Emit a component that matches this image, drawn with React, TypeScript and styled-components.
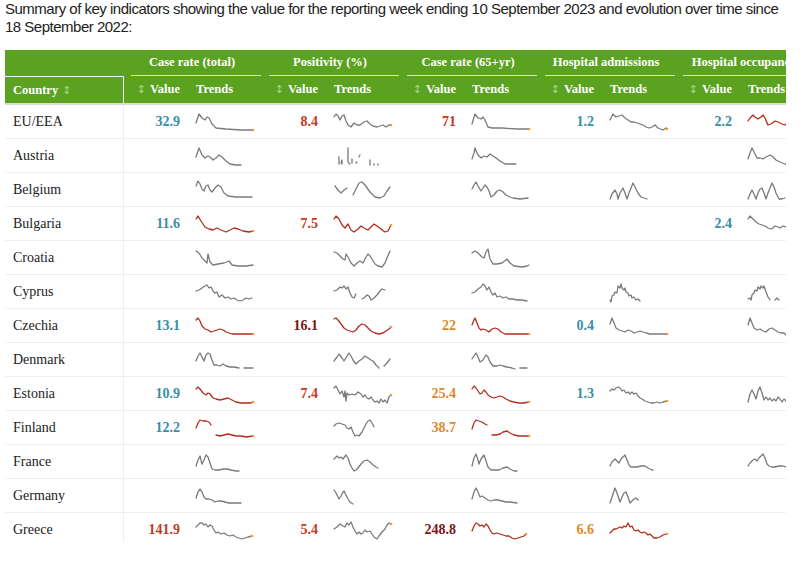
import React from 'react';
import styled, { createGlobalStyle } from 'styled-components';

const GlobalStyle = createGlobalStyle`
  html, body {
    margin: 0;
    padding: 0;
    background: #ffffff;
  }
`;

type Tone = 'teal' | 'red' | 'dark' | 'orange';

interface Cell {
  v?: string;
  tone?: Tone;
  d?: string;
  hot?: boolean;
  dot?: boolean;
}

interface Row {
  name: string;
  cells: Cell[];
}

const toneColor: Record<Tone, string> = {
  teal: '#3a8ea6',
  red: '#c33a1c',
  dark: '#7c1518',
  orange: '#e0892c',
};

const groups = ['Case rate (total)', 'Positivity (%)', 'Case rate (65+yr)', 'Hospital admissions', 'Hospital occupancy'];

const rows: Row[] = [
  { name: 'EU/EEA', cells: [
    { v: '32.9', tone: 'teal', dot: true, d: '0,10 3,1 6,5 9,7 11,4 13,5 16,11 20,15 30,16 45,17 57,17' },
    { v: '8.4', tone: 'red', dot: true, d: '0,4 2,1 4,3 6,7 8,3 10,2 12,8 14,12 17,14 20,10 23,12 26,12 30,9 33,8 36,11 39,13 43,14 46,13 49,12 52,14 55,12 57,12' },
    { v: '71', tone: 'red', dot: true, d: '0,11 3,1 6,5 9,6 11,4 13,7 16,14 20,15 30,15 45,16 57,16' },
    { v: '1.2', tone: 'teal', dot: true, d: '0,7 3,1 6,4 9,3 12,2 15,5 18,7 21,9 24,9 27,10 30,11 33,12 36,14 39,15 42,14 45,12 48,15 53,17 56,15 57,16' },
    { v: '2.2', tone: 'teal', hot: true, d: '0,8 2,5 5,2 7,4 10,6 13,4 15,2 17,5 20,12 23,11 27,8 30,9 34,11 37,12 40,10 44,12 48,14 52,13 57,14' },
  ] },
  { name: 'Austria', cells: [
    { d: '0,10 3,1 6,8 9,11 12,9 14,10 17,13 20,11 23,8 26,10 30,14 34,17 40,18 45,18' },
    { d: '5,10 5,17|7,16 8,13 8,17|14,1 14,15 16,17|18,12 18,16|22,16 23,15|25,10 26,8|36,13 36,18|40,17 40,18|44,17 44,18' },
    { d: '0,12 2,6 3,1 6,8 9,11 12,9 15,10 18,7 21,9 24,11 28,14 33,17 44,17' },
    {},
    { d: '0,12 2,6 4,1 6,5 9,11 12,11 15,12 18,10 22,8 25,10 28,13 32,15 37,17 42,17' },
  ] },
  { name: 'Belgium', cells: [
    { d: '0,5 2,0 4,3 6,8 8,10 10,5 12,4 14,9 16,11 19,7 22,4 25,6 28,12 32,15 40,16 56,16' },
    { d: '1,5 4,9 7,12 10,9 13,7|19,14 22,8 25,2 28,1 31,4 36,11 41,16 46,17 50,15 53,10 56,6' },
    { d: '0,8 2,4 4,1 6,5 9,10 11,7 13,4 15,6 17,10 19,16 22,14 25,10 28,9 31,11 34,14 38,16 41,17 48,18 56,17' },
    { d: '0,18 2,13 5,9 7,13 8,18 10,12 13,7 15,12 17,18 19,12 21,7 23,2 25,6 28,12 31,16 37,18' },
    { d: '0,18 2,13 4,9 6,13 8,18 10,12 12,8 14,7 16,12 18,18 20,12 22,7 24,2 26,6 28,12 31,18 34,18 37,17' },
  ] },
  { name: 'Bulgaria', cells: [
    { v: '11.6', tone: 'teal', hot: true, dot: true, d: '0,4 2,1 5,6 9,12 13,14 17,15 21,13 25,15 30,17 34,15 38,13 42,14 47,16 53,17 57,16' },
    { v: '7.5', tone: 'red', hot: true, dot: true, d: '0,4 2,1 5,4 8,10 11,13 14,9 17,15 20,17 24,14 27,11 30,13 34,15 37,12 40,9 43,11 47,14 51,17 54,16 57,10' },
    {},
    {},
    { v: '2.4', tone: 'teal', d: '0,4 2,1 5,4 8,7 11,9 14,10 17,11 20,13 23,14 25,13 27,11 30,12 32,13 35,11 38,12' },
  ] },
  { name: 'Croatia', cells: [
    { d: '0,2 3,4 6,9 9,12 11,14 12,5 14,13 17,16 22,15 28,14 33,12 36,16 42,17 50,17 57,16' },
    { d: '0,3 3,4 6,7 9,10 11,11 12,5 14,8 17,14 20,17 23,14 26,12 29,14 32,8 34,5 36,7 38,10 41,15 44,17 48,18 51,14 53,9 56,2' },
    { d: '0,4 3,2 6,4 10,8 12,9 14,3 16,0 18,10 21,15 25,15 30,14 34,11 35,10 38,14 42,17 50,18 55,17 57,16' },
    {},
    {},
  ] },
  { name: 'Cyprus', cells: [
    { d: '0,8 3,7 6,5 9,3 11,2 13,5 15,4 17,8 19,10 21,9 23,14 26,12 29,15 32,14 35,16 38,15 41,17 44,18 47,17 50,15 53,16 56,15' },
    { d: '0,8 3,7 6,4 8,5 10,3 12,6 14,4 16,10 18,14 20,15 22,11|28,16 30,15 33,12 35,13 37,17 40,15 43,12 46,8 48,6 51,7' },
    { d: '0,10 3,9 6,6 9,4 11,1 13,3 15,7 17,4 19,9 21,12 23,10 25,14 28,13 31,15 34,14 37,16 41,16 45,17 50,17 55,18' },
    { d: '0,17 1,19 2,13 4,12 5,9 7,10 8,3 10,5 11,1 12,5 14,7 15,5 16,9 18,10 19,13 21,12 22,15 24,14 26,17 28,16 30,18' },
    { d: '0,16 2,15 3,17 4,12 6,10 7,7 9,8 10,4 12,6 13,3 15,5 16,3 18,9 20,14 22,17|27,17 29,15 31,17' },
  ] },
  { name: 'Czechia', cells: [
    { v: '13.1', tone: 'teal', hot: true, dot: true, d: '0,3 2,1 4,4 6,9 9,12 12,13 15,15 18,14 21,13 24,12 27,13 30,15 33,16 36,17 45,17 57,17' },
    { v: '16.1', tone: 'dark', hot: true, dot: true, d: '0,2 2,1 4,3 7,7 10,11 13,13 16,14 19,15 22,13 25,9 28,7 31,8 34,11 37,14 41,16 45,17 49,16 52,14 55,12 57,10' },
    { v: '22', tone: 'orange', hot: true, dot: true, d: '0,8 2,3 3,1 5,6 7,11 9,13 11,12 14,13 17,15 20,12 23,11 26,12 29,15 33,17 45,17 57,17' },
    { v: '0.4', tone: 'teal', dot: true, d: '0,7 2,1 4,6 6,11 9,13 12,14 15,15 18,13 21,14 24,16 27,15 30,14 33,15 36,16 40,17 50,17 57,17' },
    { d: '0,8 2,1 4,6 6,11 9,13 12,12 15,14 18,15 21,12 24,11 27,13 30,15 33,16 36,16 38,18' },
  ] },
  { name: 'Denmark', cells: [
    { d: '0,10 2,5 4,2 6,6 8,10 10,4 12,2 14,3 16,9 18,14 21,14 24,15 27,13 30,15 34,16 38,16 43,17|48,17 57,17' },
    { d: '0,10 3,6 5,3 8,7 10,10 13,5 15,2 17,5 19,9 22,13 25,10 28,8 31,5 34,7 37,9 39,10 42,14 45,17|50,15 53,12 56,8' },
    { d: '0,8 2,5 4,2 6,6 8,11 11,9 14,4 16,6 18,11 21,15 25,15 28,14 31,15 35,16 40,17 43,18|48,17 55,17' },
    {},
    {},
  ] },
  { name: 'Estonia', cells: [
    { v: '10.9', tone: 'teal', hot: true, dot: true, d: '0,4 2,2 4,4 7,8 10,10 12,8 14,9 17,13 20,14 24,15 28,14 32,13 36,15 40,17 45,18 50,18 55,18 57,17' },
    { v: '7.4', tone: 'red', dot: true, d: '0,3 2,1 4,5 6,9 8,6 10,12 11,6 12,16 13,8 15,10 18,9 21,10 24,7 27,9 29,12 31,10 33,13 35,14 37,12 39,15 41,17 43,16 45,18 47,14 49,17 51,15 53,18 55,12 57,10' },
    { v: '25.4', tone: 'orange', hot: true, dot: true, d: '0,4 2,1 4,3 6,6 8,9 10,8 12,5 14,7 16,10 19,12 22,13 25,12 28,11 31,12 34,14 38,16 42,17 47,18 52,18 57,17' },
    { v: '1.3', tone: 'teal', dot: true, d: '0,6 2,4 4,5 6,3 8,2 10,3 12,6 14,5 16,8 18,7 20,9 22,7 24,9 26,8 28,11 30,13 32,14 35,16 38,17 41,18 44,18 47,17 50,18 53,17 57,16' },
    { d: '0,17 2,9 4,5 6,9 8,14 10,6 12,2 14,8 16,15 18,12 20,15 22,13 24,16 26,14 28,16 30,12 32,14 34,17 36,14 38,16' },
  ] },
  { name: 'Finland', cells: [
    { v: '12.2', tone: 'teal', hot: true, dot: true, d: '0,9 2,4 4,1 7,2 10,2 13,3 15,6|20,16 24,17 28,16 32,15 36,16 40,17 45,17 50,18 57,17' },
    { d: '0,7 2,5 5,4 8,5 11,6 13,9 15,10 17,8 19,13 21,17 23,16 25,17 28,13 30,9 32,5 34,2 36,1 38,4 40,8' },
    { v: '38.7', tone: 'orange', hot: true, dot: true, d: '0,10 2,4 4,1 7,2 10,3 13,5 15,6|20,16 24,16 28,15 31,13 35,12 38,14 42,16 47,17 52,17 57,17' },
    {},
    {},
  ] },
  { name: 'France', cells: [
    { d: '0,13 2,7 4,3 6,11 8,7 10,2 12,4 14,10 16,16 19,17 23,17 27,16 31,16 35,17 40,18 43,18' },
    { d: '0,6 3,3 5,5 7,4 9,6 12,2 14,5 16,11 18,15 20,18 22,17 24,15 27,11 30,8 33,7 36,9 39,12 42,14 44,15' },
    { d: '0,13 2,5 4,1 6,7 7,11 9,6 12,2 14,8 16,14 19,17 23,17 27,17 31,15 35,14 38,16 42,18 45,18' },
    { d: '0,13 2,9 5,6 7,8 9,10 11,6 13,4 15,2 17,7 19,12 21,14 24,14 27,14 31,13 35,13 38,15 42,17 43,17' },
    { d: '0,13 2,10 5,7 7,6 9,8 11,5 13,3 15,1 17,5 19,11 21,13 24,14 27,14 31,13 35,13 38,14' },
  ] },
  { name: 'Germany', cells: [
    { d: '0,11 2,5 4,2 6,5 8,10 10,12 13,12 16,13 19,15 22,14 25,14 29,15 33,16 38,16 45,16' },
    { d: '0,3 2,6 4,10 5,12 7,9 9,5 10,4 12,8 14,12 16,15 19,17' },
    { d: '0,12 2,5 4,1 6,5 8,10 10,9 13,11 16,13 19,14 22,13 26,13 30,14 34,15 38,15 45,16' },
    { d: '0,16 2,10 4,4 5,1 7,6 9,12 10,15 12,10 14,6 16,5 18,10 20,16 22,14 24,12 26,11 28,13' },
    {},
  ] },
  { name: 'Greece', cells: [
    { v: '141.9', tone: 'red', dot: true, d: '0,6 2,4 4,2 6,2 8,4 10,3 12,6 14,4 16,5 18,9 20,12 22,11 25,13 28,12 31,14 34,15 37,14 40,16 43,17 46,18 49,17 52,16 56,15' },
    { v: '5.4', tone: 'red', dot: true, d: '0,8 3,6 6,3 9,5 11,6 13,2 15,4 17,1 19,6 21,10 23,13 25,11 27,13 29,12 31,9 33,11 36,10 38,13 40,16 43,18 45,15 48,11 51,8 53,4 55,2 57,3' },
    { v: '248.8', tone: 'dark', hot: true, dot: true, d: '0,10 2,5 4,2 6,3 8,5 10,4 12,6 14,3 16,5 18,9 20,12 22,13 25,12 28,13 31,14 34,15 37,15 40,17 43,18 46,17 49,16 52,15 54,13' },
    { v: '6.6', tone: 'orange', hot: true, dot: true, d: '0,12 2,10 4,8 6,8 8,7 10,6 12,7 14,5 16,6 18,2 20,6 22,5 24,9 26,10 28,9 30,11 32,12 34,11 36,12 38,14 40,13 42,15 44,17 47,17 50,16 53,14 56,13 57,13' },
    {},
  ] },
];

const Page = styled.div`
  padding: 0 5px;
  font-family: 'Liberation Sans', Arial, sans-serif;
`;

const Intro = styled.p`
  margin: 0 0 14px;
  width: 781px;
  font-size: 15px;
  line-height: 18px;
  letter-spacing: -0.5px;
  color: #222222;
`;

const TableFrame = styled.div`
  width: 781px;
  height: 492px;
  overflow: hidden;
`;

const Table = styled.table`
  width: 808px;
  table-layout: fixed;
  border-collapse: collapse;
  font-family: 'Liberation Serif', 'Times New Roman', serif;
`;

const HeadCell = styled.th<{ $align?: 'left' | 'right' | 'center' }>`
  background: #5aa21f;
  color: #ffffff;
  font-size: 12.5px;
  font-weight: bold;
  height: 26px;
  padding: 0 8px;
  text-align: ${p => p.$align || 'left'};
  vertical-align: middle;
  white-space: nowrap;
  overflow: hidden;
`;

const CornerCell = styled(HeadCell)`
  border-bottom: 1px solid rgba(255, 255, 255, 0.75);
`;

const CountryHead = styled(HeadCell)`
  border-right: 1px solid rgba(255, 255, 255, 0.75);
`;

const GroupCell = styled(HeadCell)`
  padding: 0;
`;

const GroupLabel = styled.div`
  margin-left: 8px;
  padding-right: 8px;
  height: 25px;
  line-height: 25px;
  text-align: center;
  white-space: nowrap;
  border-bottom: 1px solid rgba(255, 255, 255, 0.75);
`;

const SortMark = styled.span`
  color: #a9d58c;
  font-weight: normal;
  font-family: 'DejaVu Sans', sans-serif;
  font-size: 11px;
  margin: 0 4px;
`;

const HeadRow = styled.tr<{ $last?: boolean }>`
  border-bottom: ${p => (p.$last ? '2px solid #dcdcdc' : 'none')};
`;

const BodyRow = styled.tr`
  border-bottom: 1px solid #efefef;
  &:last-child {
    border-bottom: none;
  }
`;

const NameCell = styled.td`
  height: 33px;
  padding: 0 8px;
  font-size: 14px;
  color: #222222;
  border-right: 1px solid #efefef;
  vertical-align: middle;
`;

const ValueCell = styled.td<{ $tone?: Tone }>`
  padding: 0 8px 0 0;
  text-align: right;
  font-size: 14px;
  font-weight: bold;
  color: ${p => (p.$tone ? toneColor[p.$tone] : '#222222')};
  vertical-align: middle;
`;

const TrendCell = styled.td`
  padding: 0 0 0 8px;
  vertical-align: middle;
`;

const Spark = styled.svg`
  display: block;
  width: 60px;
  height: 20px;
  overflow: visible;
`;

function Sparkline({ d, hot, dot }: { d: string; hot?: boolean; dot?: boolean }) {
  const parts = d.split('|');
  const lastPart = parts[parts.length - 1].trim().split(' ');
  const [lx, ly] = lastPart[lastPart.length - 1].split(',').map(Number);
  return (
    <Spark viewBox="0 -1 60 20">
      {parts.map((p, i) => (
        <polyline
          key={i}
          points={p}
          fill="none"
          stroke={hot ? '#b32d1c' : '#7a7a7a'}
          strokeWidth={1.3}
          strokeLinejoin="round"
          strokeLinecap="round"
        />
      ))}
      {dot && <circle cx={lx} cy={ly} r={1.3} fill="#f39a3b" />}
    </Spark>
  );
}

export default function App() {
  return (
    <Page>
      <GlobalStyle />
      <Intro>
        Summary of key indicators showing the value for the reporting week ending 10 September 2023 and evolution over time since 18 September 2022:
      </Intro>
      <TableFrame>
        <Table>
          <colgroup>
            <col style={{ width: 118 }} />
            {groups.map(g => (
              <React.Fragment key={g}>
                <col style={{ width: 65 }} />
                <col style={{ width: 73 }} />
              </React.Fragment>
            ))}
          </colgroup>
          <thead>
            <HeadRow>
              <CornerCell />
              {groups.map(g => (
                <GroupCell key={g} colSpan={2}>
                  <GroupLabel>{g}</GroupLabel>
                </GroupCell>
              ))}
            </HeadRow>
            <HeadRow $last>
              <CountryHead>
                Country<SortMark>↕</SortMark>
              </CountryHead>
              {groups.map(g => (
                <React.Fragment key={g}>
                  <HeadCell $align="right">
                    <SortMark>↕</SortMark>Value
                  </HeadCell>
                  <HeadCell>Trends</HeadCell>
                </React.Fragment>
              ))}
            </HeadRow>
          </thead>
          <tbody>
            {rows.map(r => (
              <BodyRow key={r.name}>
                <NameCell>{r.name}</NameCell>
                {r.cells.map((c, i) => (
                  <React.Fragment key={i}>
                    <ValueCell $tone={c.tone}>{c.v}</ValueCell>
                    <TrendCell>{c.d && <Sparkline d={c.d} hot={c.hot} dot={c.dot} />}</TrendCell>
                  </React.Fragment>
                ))}
              </BodyRow>
            ))}
          </tbody>
        </Table>
      </TableFrame>
    </Page>
  );
}
